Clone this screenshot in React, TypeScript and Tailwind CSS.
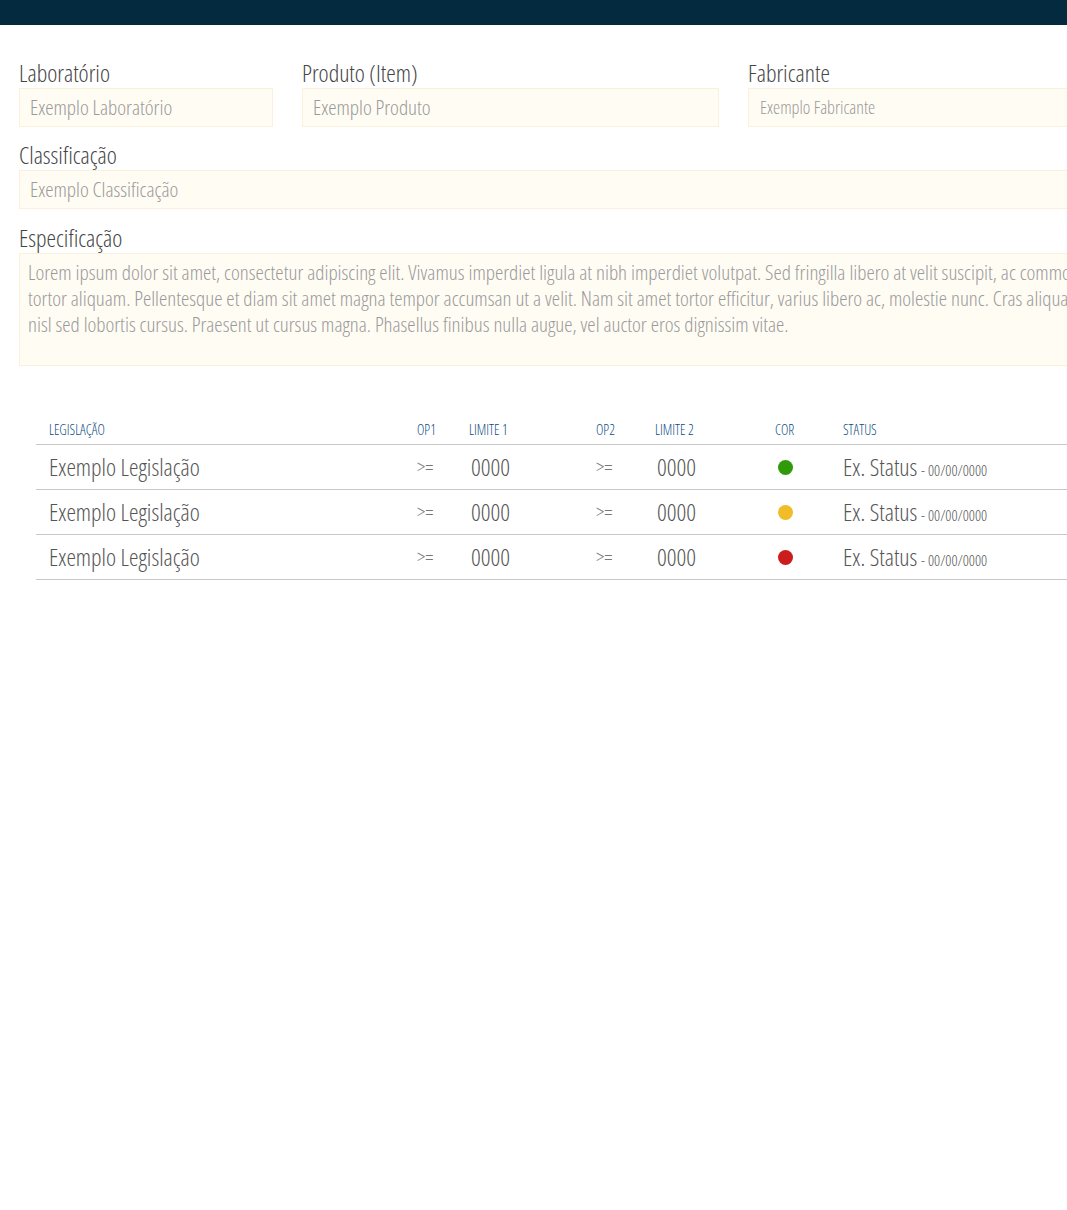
import React from "react";

interface Row {
    legislacao: string;
    op1: string;
    limite1: string;
    op2: string;
    limite2: string;
    cor: string;
    status: string;
    data: string;
}

const rows: Row[] = [
    { legislacao: "Exemplo Legislação", op1: ">=", limite1: "0000", op2: ">=", limite2: "0000", cor: "bg-[#2f9a0a]", status: "Ex. Status", data: "00/00/0000" },
    { legislacao: "Exemplo Legislação", op1: ">=", limite1: "0000", op2: ">=", limite2: "0000", cor: "bg-[#f0bc27]", status: "Ex. Status", data: "00/00/0000" },
    { legislacao: "Exemplo Legislação", op1: ">=", limite1: "0000", op2: ">=", limite2: "0000", cor: "bg-[#cc1d1d]", status: "Ex. Status", data: "00/00/0000" },
];

const font = "font-['Open_Sans',sans-serif] font-light font-stretch-condensed";
const cols = "grid grid-cols-[381px_52px_127px_59px_120px_68px_1fr]";

function Field({ label, placeholder, small }: { label: string; placeholder: string; small?: boolean }) {
    return (
        <div className="flex flex-col">
            <label className="h-[28px] text-[24px] leading-[26px] text-[#454545]">{label}</label>
            <div
                className={`h-[39px] bg-[#fffcf4] border border-[#fbf0dc] flex items-center text-[#9a9a9a] ${small ? "text-[18px] px-[11px]" : "text-[21px] px-[10px]"}`}
            >
                {placeholder}
            </div>
        </div>
    );
}

export default function App() {
    return (
        <div className={`w-full min-h-[1210px] overflow-hidden bg-white ${font}`}>
            {/* Top bar */}
            <div className="h-[25px] bg-[#032a3e]" />

            <div className="w-[1300px] pl-[19px] pt-[35px]">
                {/* First row */}
                <div className="grid grid-cols-[254px_417px_1fr] gap-[29px]">
                    <Field label="Laboratório" placeholder="Exemplo Laboratório" />
                    <Field label="Produto (Item)" placeholder="Exemplo Produto" />
                    <Field label="Fabricante" placeholder="Exemplo Fabricante" small />
                </div>

                <div className="mt-[15px]">
                    <Field label="Classificação" placeholder="Exemplo Classificação" />
                </div>

                {/* Especificação */}
                <div className="mt-[16px] flex flex-col">
                    <label className="h-[28px] text-[24px] leading-[26px] text-[#454545]">Especificação</label>
                    <div className="h-[113px] bg-[#fffcf4] border border-[#fbf0dc] px-[8px] pt-[5px] text-[21px] leading-[26px] text-[#9a9a9a] whitespace-nowrap">
                        Lorem ipsum dolor sit amet, consectetur adipiscing elit. Vivamus imperdiet ligula at nibh imperdiet volutpat. Sed fringilla libero at velit suscipit, ac commodo
                        <br />
                        tortor aliquam. Pellentesque et diam sit amet magna tempor accumsan ut a velit. Nam sit amet tortor efficitur, varius libero ac, molestie nunc. Cras aliquam
                        <br />
                        nisl sed lobortis cursus. Praesent ut cursus magna. Phasellus finibus nulla augue, vel auctor eros dignissim vitae.
                    </div>
                </div>

                {/* Table */}
                <div className="ml-[17px] mt-[55px]">
                    <div className={`${cols} border-b border-[#c8c8c8] pb-[5px] text-[14px] leading-[18px] text-[#0e4c84]`}>
                        <div className="pl-[13px]">LEGISLAÇÃO</div>
                        <div>OP1</div>
                        <div>LIMITE 1</div>
                        <div>OP2</div>
                        <div>LIMITE 2</div>
                        <div>COR</div>
                        <div>STATUS</div>
                    </div>
                    {rows.map((row, i) => (
                        <div key={i} className={`${cols} h-[45px] items-center border-b border-[#c8c8c8] text-[#555]`}>
                            <div className="pl-[13px] text-[24px]">{row.legislacao}</div>
                            <div className="text-[20px] text-[#777]">{row.op1}</div>
                            <div className="pl-[2px] text-[24px]">{row.limite1}</div>
                            <div className="text-[20px] text-[#777]">{row.op2}</div>
                            <div className="pl-[2px] text-[24px]">{row.limite2}</div>
                            <div className="pl-[3px]">
                                <span className={`block w-[15px] h-[15px] rounded-full ${row.cor}`} />
                            </div>
                            <div className="text-[24px]">
                                {row.status}
                                <span className="ml-[1px] text-[15px] text-[#555]"> - {row.data}</span>
                            </div>
                        </div>
                    ))}
                </div>
            </div>
        </div>
    );
}
